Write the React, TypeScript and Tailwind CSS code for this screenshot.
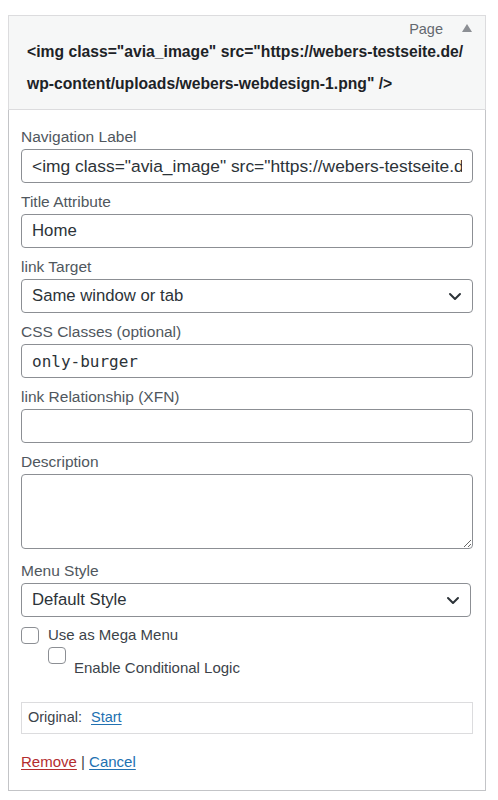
import React from "react";

const font = { fontFamily: '"Liberation Sans", Arial, sans-serif' };

function Label({ children }: { children: React.ReactNode }) {
  return <div className="h-5 leading-5 text-[15.5px] text-[#50575e]">{children}</div>;
}

function TextInput({ value, mono, wide }: { value: string; mono?: boolean; wide?: boolean }) {
  return (
    <input
      readOnly
      value={value}
      className={
        "mt-[2px] block h-[34px] w-[452px] rounded-[4px] border border-[#8c8f94] bg-white px-[10px] text-[#2c3338] outline-none " +
        (mono ? "font-['DejaVu_Sans_Mono',monospace] text-[16px]" : wide ? "text-[17.4px]" : "text-[16.8px]")
      }
    />
  );
}

function Select({ value, narrow }: { value: string; narrow?: boolean }) {
  return (
    <div
      className={
        "mt-[2px] flex h-[34px] items-center justify-between rounded-[4px] border border-[#8c8f94] bg-white pl-[10px] pr-[10px] text-[16.7px] text-[#2c3338] " +
        (narrow ? "w-[450px] h-[33px]" : "w-[452px]")
      }
    >
      <span>{value}</span>
      <svg width="14" height="10" viewBox="0 0 14 10">
        <path d="M2 3 L7 8 L12 3" fill="none" stroke="#2c3338" strokeWidth="2" strokeLinecap="round" strokeLinejoin="round" />
      </svg>
    </div>
  );
}

function Checkbox() {
  return <div className="h-[17px] w-[18px] shrink-0 rounded-[4px] border border-[#8c8f94] bg-white" />;
}

export default function App() {
  return (
    <div className="min-h-[800px] bg-white pt-[15px]" style={font}>
      <div className="ml-[8px] w-[478px]">
        <div className="h-[95px] border border-[#dcdcde] bg-[#f6f7f7] pt-[7px]">
          <div className="flex h-[13px] items-center justify-end pr-[13px]">
            <span className="text-[14.5px] text-[#646970]">Page</span>
            <svg width="10" height="8" viewBox="0 0 10 8" className="ml-[19px] mb-[3px]">
              <path d="M0 8 L5 0 L10 8 Z" fill="#8c8f94" />
            </svg>
          </div>
          <div className="pl-[18px] text-[15.7px] font-bold leading-[32px] text-[#1d2327]">
            {'<img class="avia_image" src="https://webers-testseite.de/'}
            <br />
            {'wp-content/uploads/webers-webdesign-1.png" />'}
          </div>
        </div>
        <div className="border-x border-b border-[#c3c4c7] bg-white pl-[12px] pt-[17px] pb-[18px]">
          <Label>Navigation Label</Label>
          <TextInput wide value={'<img class="avia_image" src="https://webers-testseite.de/wp-content/uploads/webers-webdesign-1.png" />'} />
          <div className="mt-[9px]">
            <Label>Title Attribute</Label>
            <TextInput value="Home" />
          </div>
          <div className="mt-[9px]">
            <Label>link Target</Label>
            <Select value="Same window or tab" />
          </div>
          <div className="mt-[9px]">
            <Label>CSS Classes (optional)</Label>
            <TextInput value="only-burger" mono />
          </div>
          <div className="mt-[9px]">
            <Label>link Relationship (XFN)</Label>
            <TextInput value="" />
          </div>
          <div className="mt-[9px]">
            <Label>Description</Label>
            <textarea
              readOnly
              className="mt-[2px] block h-[75px] w-[452px] rounded-[4px] border border-[#8c8f94] bg-white outline-none"
            />
          </div>
          <div className="mt-[12px]">
            <Label>Menu Style</Label>
            <Select value="Default Style" narrow />
          </div>
          <div className="mt-[8px] flex items-center gap-[9px]">
            <Checkbox />
            <span className="text-[15px] leading-5 text-[#3c434a]">Use as Mega Menu</span>
          </div>
          <div className="ml-[27px] flex items-start gap-[8px]">
            <div className="mt-[2px]">
              <Checkbox />
            </div>
            <span className="mt-[13px] text-[15px] leading-5 text-[#3c434a]">Enable Conditional Logic</span>
          </div>
          <div className="mt-[24px] flex h-[32px] w-[452px] items-center border border-[#dcdcde] bg-white pl-[6px] text-[14.5px] text-[#3c434a]">
            <span>Original:</span>
            <a className="ml-[9px] text-[#2271b1] underline underline-offset-2">Start</a>
          </div>
          <div className="mt-[18px] text-[15px] leading-5 text-[#3c434a]">
            <a className="text-[#b32d2e] underline underline-offset-2">Remove</a>
            <span> | </span>
            <a className="text-[#2271b1] underline underline-offset-2">Cancel</a>
          </div>
        </div>
      </div>
    </div>
  );
}
